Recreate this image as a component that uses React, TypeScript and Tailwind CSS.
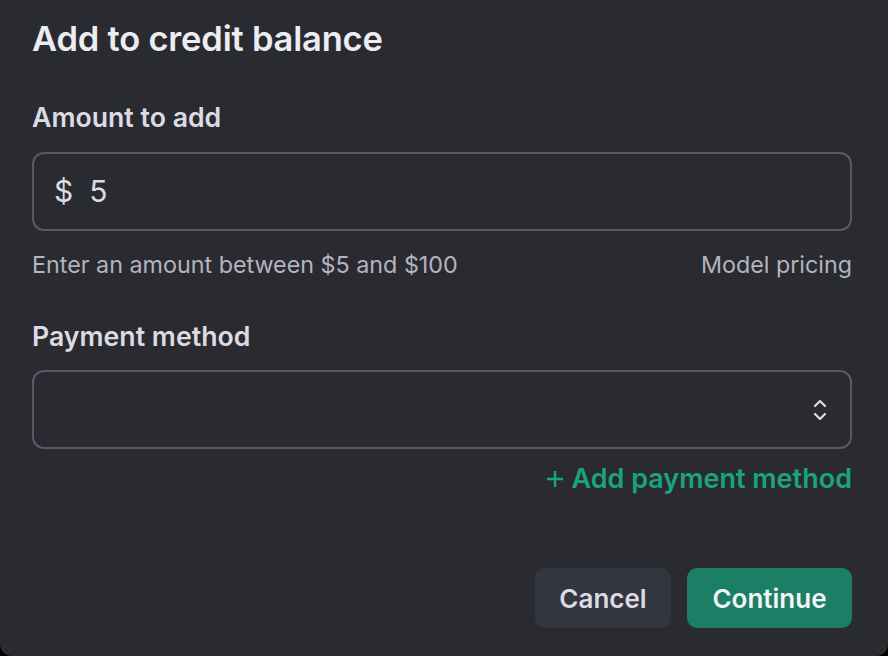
export default function App() {
  return (
    <div className="h-[656px] w-[888px] overflow-hidden bg-black font-['Inter',sans-serif]">
      <div className="flex h-full flex-col rounded-b-[12px] bg-[#2a2b31] pl-[32px] pr-[36px] pt-[18px]">
        <h1 className="text-[34.5px] font-semibold leading-[42px] tracking-[-0.2px] text-[#ececf1]">
          Add to credit balance
        </h1>

        <div className="mt-[40px] text-[26.7px] font-semibold leading-[34px] text-[#dcdbe4]">
          Amount to add
        </div>
        <div className="mt-[18px] flex h-[79px] items-center rounded-[12px] border-2 border-[#5a596b] px-[20px] text-[30px] text-[#dcdbe4]">
          <span>$</span>
          <span className="ml-[16px]">5</span>
        </div>
        <div className="mt-[20px] flex items-center justify-between text-[23.3px] leading-[28px] text-[#b4b3c0]">
          <span>Enter an amount between $5 and $100</span>
          <span>Model pricing</span>
        </div>

        <div className="mt-[40px] text-[26.7px] font-semibold leading-[34px] text-[#dcdbe4]">
          Payment method
        </div>
        <div className="mt-[17px] flex h-[79px] items-center justify-end rounded-[12px] border-2 border-[#5a596b] pr-[22px]">
          <svg width="16" height="24" viewBox="0 0 16 24" fill="none" stroke="#dcdbe4" strokeWidth="2.2" strokeLinecap="round" strokeLinejoin="round">
            <path d="M3 8l5-5 5 5" />
            <path d="M3 16l5 5 5-5" />
          </svg>
        </div>
        <div className="mt-[13px] flex items-center justify-end gap-[8px] text-[27px] font-semibold leading-[34px] text-[#19a37f]">
          <svg width="16" height="16" viewBox="0 0 16 16" fill="none" stroke="#19a37f" strokeWidth="2.4">
            <path d="M8 0v16M0 8h16" />
          </svg>
          <span>Add payment method</span>
        </div>

        <div className="mt-[72px] flex justify-end gap-[16px]">
          <button className="h-[60px] w-[136px] rounded-[10px] bg-[#33353f] text-[26px] font-semibold text-[#dcdbe4]">
            Cancel
          </button>
          <button className="h-[60px] w-[165px] rounded-[10px] bg-[#1a7f64] text-[26px] font-semibold text-[#f4f4f6]">
            Continue
          </button>
        </div>
      </div>
    </div>
  );
}
